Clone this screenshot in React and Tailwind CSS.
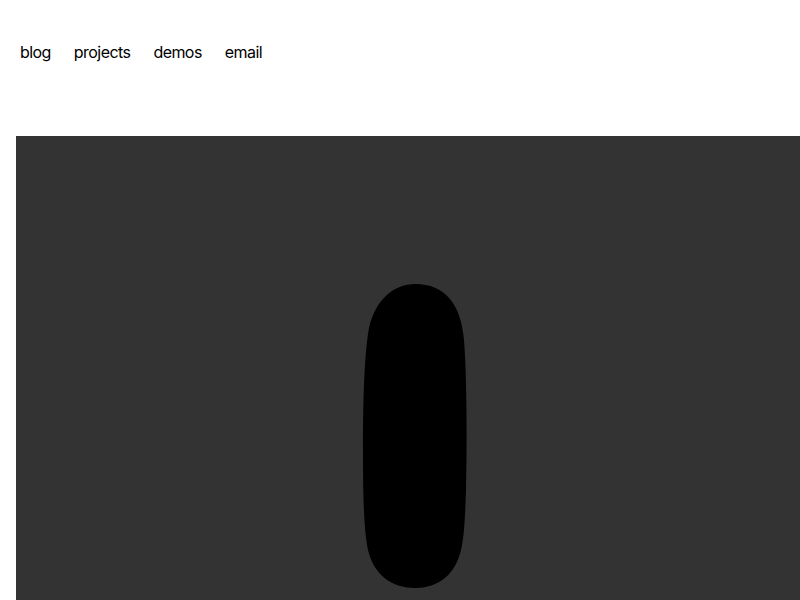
export default function App() {
  return (
    <div className="h-[600px] bg-white pl-4 overflow-hidden" style={{ fontFamily: "Inter, 'Noto Sans', sans-serif" }}>
      <nav className="flex gap-[15px] pt-10 h-[136px] text-[16px] leading-6 tracking-[-0.035em] text-black">
        <a className="px-1">blog</a>
        <a className="px-1">projects</a>
        <a className="px-1">demos</a>
        <a className="px-1">email</a>
      </nav>
      <div className="bg-[#333333] h-[464px] w-full relative">
        <svg className="absolute left-0 top-0" width="784" height="464" viewBox="16 136 784 464">
          <path
            d="M 415 284 C 445 284, 461 304, 464 340 C 467 380, 467 440, 466 490 C 465 520, 464 535, 462 545 C 457 575, 438 588, 415 588 C 392 588, 372 575, 367 545 C 364 525, 363 500, 363 450 C 363 390, 365 350, 369 328 C 376 298, 395 284, 415 284 Z"
            fill="#000"
          />
        </svg>
      </div>
    </div>
  );
}
